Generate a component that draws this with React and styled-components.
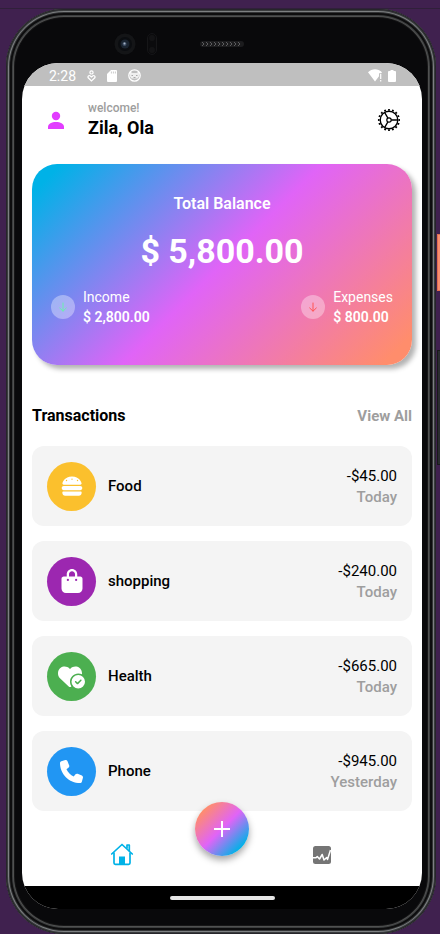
import React from "react";
import styled, { createGlobalStyle } from "styled-components";
import {
  FaBurger,
  FaBagShopping,
  FaHeartCircleCheck,
  FaPhone,
} from "react-icons/fa6";

const GlobalStyle = createGlobalStyle`
  * { box-sizing: border-box; }
  body {
    margin: 0;
    background: #40214f;
    font-family: Roboto, "Liberation Sans", sans-serif;
    color: #000;
  }
  h1, h2, p, ul { margin: 0; padding: 0; font-size: inherit; }
  button, a { font: inherit; color: inherit; text-decoration: none; }
`;

const Desktop = styled.div`
  border-top: 8px solid #40214f;
  box-shadow: inset 0 1px 0 #30203a;
  padding: 1px 4px 0 6px;
  overflow: hidden;
`;

const Phone = styled.div`
  position: relative;
  display: flex;
  flex-direction: column;
  padding: 0 14px 25px 16px;
  border-radius: 58px;
  background: #09090b;
  box-shadow:
    inset 0 0 0 1px #26252a,
    inset 0 0 0 2px #3a3c3e,
    inset 0 0 0 3px #7d8082,
    inset 0 0 0 4px #333436,
    inset 0 0 0 6px #0d0d0e,
    inset 0 0 0 7px #3c3e3f,
    inset 0 0 0 8px #505151,
    inset 0 0 0 9px #161617;
`;

const SideButton = styled.span`
  position: absolute;
  left: 100%;
  top: ${(p) => p.$top}px;
  width: 6px;
  height: ${(p) => p.$height}px;
  margin-left: 1px;
  background: ${(p) => p.$color};
  border: 1px solid ${(p) => p.$edge};
`;

const Forehead = styled.div`
  display: grid;
  grid-template-columns: 1fr 44px 1fr;
  align-items: center;
  height: 54px;
  padding-top: 16px;
`;

const Sensors = styled.div`
  display: flex;
  align-items: center;
  justify-content: flex-end;
  gap: 11px;
  padding-right: 43px;
`;

const Screen = styled.div`
  overflow: hidden;
  border-radius: 36px;
  background: #fff;
`;

const StatusBar = styled.div`
  display: flex;
  align-items: center;
  justify-content: space-between;
  height: 23px;
  padding: 2px 26px 0 27px;
  background: #bfbfbf;
  color: #fff;
  font-size: 14px;
  line-height: 16px;
`;

const StatusGroup = styled.div`
  display: flex;
  align-items: center;
  gap: ${(p) => p.$gap}px;
`;

const Main = styled.main`
  padding: 14px 10px 0;
`;

const Header = styled.header`
  display: flex;
  align-items: center;
  gap: 8px;
`;

const Avatar = styled.span`
  display: flex;
  justify-content: center;
  width: 48px;
  color: #e23dff;
`;

const Greeting = styled.div`
  flex: 1;
`;

const Welcome = styled.p`
  font-size: 12px;
  line-height: 16px;
  font-weight: 500;
  color: #9e9e9e;
`;

const UserName = styled.h1`
  font-size: 18px;
  line-height: 24px;
  font-weight: 700;
`;

const IconButton = styled.button`
  display: flex;
  justify-content: center;
  width: 46px;
  padding: 0;
  border: 0;
  background: none;
  color: ${(p) => p.$color};
  cursor: pointer;
`;

const BalanceCard = styled.section`
  margin-top: 24px;
  padding: 29px 19px 38px;
  border-radius: 25px;
  background: linear-gradient(135deg, #00b2e7 5%, #e064f7 50%, #ff8d6c 95%);
  box-shadow: 4px 4px 5px #0000004d;
  color: #fff;
  text-align: center;
`;

const CardTitle = styled.h2`
  font-size: 16px;
  line-height: 22px;
  font-weight: 600;
`;

const CardAmount = styled.p`
  margin: 12px 0;
  font-size: 34px;
  line-height: 48px;
  font-weight: 700;
`;

const Flows = styled.div`
  display: flex;
  justify-content: space-between;
  text-align: left;
`;

const Flow = styled.div`
  display: flex;
  align-items: center;
  gap: 8px;
`;

const FlowBadge = styled.span`
  display: flex;
  align-items: center;
  justify-content: center;
  width: 24px;
  height: 24px;
  border-radius: 50%;
  background: #ffffff59;
  color: ${(p) => p.$color};
`;

const FlowText = styled.p`
  font-size: 14px;
  line-height: 20px;
  font-weight: ${(p) => (p.$strong ? 600 : 400)};
`;

const SectionHead = styled.div`
  display: flex;
  justify-content: space-between;
  margin: 41px 0 20px;
  font-size: 16px;
  line-height: 20px;
  font-weight: 700;
`;

const ViewAll = styled.a`
  && {
    color: #9e9e9e;
    font-size: 15px;
  }
`;

const List = styled.ul`
  display: flex;
  flex-direction: column;
  gap: 15px;
  list-style: none;
`;

const Row = styled.li`
  display: flex;
  align-items: center;
  gap: 12px;
  height: 80px;
  padding: 0 15px;
  border-radius: 12px;
  background: #f4f4f4;
`;

const Category = styled.span`
  display: flex;
  align-items: center;
  justify-content: center;
  width: 49px;
  height: 49px;
  border-radius: 50%;
  background: ${(p) => p.$color};
  color: #fff;
`;

const RowName = styled.span`
  flex: 1;
  font-size: 15px;
  line-height: 20px;
  font-weight: 500;
`;

const RowFigures = styled.div`
  padding-top: 1px;
  text-align: right;
  font-size: 15px;
  line-height: 21px;
`;

const RowDate = styled.p`
  font-weight: 500;
  color: #9e9e9e;
`;

const Nav = styled.nav`
  position: relative;
  display: grid;
  grid-template-columns: 1fr 1fr;
  justify-items: center;
  align-items: center;
  height: 63px;
  margin-top: 12px;
`;

const AddButton = styled.button`
  position: absolute;
  left: 50%;
  top: -21px;
  transform: translateX(-50%);
  display: flex;
  align-items: center;
  justify-content: center;
  width: 54px;
  height: 54px;
  padding: 0;
  border: 0;
  border-radius: 50%;
  background: linear-gradient(315deg, #00b2e7 15%, #e064f7 50%, #ff8d6c 85%);
  box-shadow: 0 4px 7px #00000059;
  cursor: pointer;
`;

const SystemBar = styled.div`
  display: flex;
  justify-content: center;
  align-items: center;
  height: 23px;
  background: #000;
`;

const HomePill = styled.span`
  width: 105px;
  height: 4px;
  border-radius: 2px;
  background: #e6e6e6;
`;

const Camera = () => (
  <svg width="22" height="22" viewBox="0 0 22 22" aria-hidden="true">
    <circle cx="11" cy="11" r="10.5" fill="#141517" />
    <circle cx="11" cy="11" r="7" fill="#0b0d10" />
    <circle cx="11" cy="11" r="4.5" fill="#1a2430" />
    <circle cx="10.5" cy="11" r="2" fill="#3f4f66" />
    <circle cx="10.5" cy="10.5" r="1" fill="#a9b5c4" />
  </svg>
);

const Proximity = () => (
  <svg width="10" height="22" viewBox="0 0 10 22" aria-hidden="true">
    <rect x=".5" y=".5" width="9" height="21" rx="4.5" fill="#0b0b0d" stroke="#161618" />
    <circle cx="5" cy="5" r="3" fill="#131315" />
    <circle cx="5" cy="17" r="3" fill="#131315" />
  </svg>
);

const Speaker = () => (
  <svg width="44" height="6" viewBox="0 0 44 6" aria-hidden="true">
    <rect width="44" height="6" rx="3" fill="#1c1c1e" />
    <path
      d="M2 1l2 2-2 2M6 1l2 2-2 2M10 1l2 2-2 2M14 1l2 2-2 2M18 1l2 2-2 2M22 1l2 2-2 2M26 1l2 2-2 2M30 1l2 2-2 2M34 1l2 2-2 2M38 1l2 2-2 2"
      fill="none"
      stroke="#5c5c5e"
    />
  </svg>
);

const DebugIcon = () => (
  <svg width="9" height="12" viewBox="0 0 9 12" fill="none" stroke="#fff" strokeWidth="1.2" aria-hidden="true">
    <circle cx="4.5" cy="2.4" r="1.6" />
    <path d="M4.5 11 1.2 7.8C.4 6.600 1.7 5 3 5.700L4.500 7 6 5.700C7.300 5 8.600 6.600 7.800 7.800Z" />
  </svg>
);

const CardIcon = () => (
  <svg width="10" height="12" viewBox="0 0 10 12" aria-hidden="true">
    <path fill="#fff" d="M4 0h5a1 1 0 0 1 1 1v10a1 1 0 0 1-1 1H1a1 1 0 0 1-1-1V4z" />
    <path stroke="#bfbfbf" strokeWidth=".8" d="M4.4 1.5v2M6.4 1.5v2M8.4 1.5v2" />
  </svg>
);

const CatIcon = () => (
  <svg width="13" height="13" viewBox="0 0 13 13" aria-hidden="true">
    <circle cx="6.500" cy="6.500" r="5.700" fill="none" stroke="#fff" strokeWidth="1.300" />
    <path fill="#fff" d="M2 2.500 4.500 4h4L11 2.500v5L9.500 9.500h-6L2 7.500z" opacity=".75" />
    <path stroke="#aaa" strokeWidth="1" d="M3.500 6.500H5M8 6.500h1.500M5.500 8.500h2" />
  </svg>
);

const WifiIcon = () => (
  <svg width="15" height="13" viewBox="0 0 15 13" aria-hidden="true">
    <path fill="#fff" d="M7 12.500 0 3.200C4-.8 10-.8 14 3.200l-.8 1H11v3z" />
    <path stroke="#fff" strokeWidth="1.200" d="M12.700 5v5M12.700 11v1.500" />
  </svg>
);

const BatteryIcon = () => (
  <svg width="8" height="12" viewBox="0 0 8 12" aria-hidden="true">
    <path fill="#fff" d="M2.500 0h3v1H7a1 1 0 0 1 1 1v9a1 1 0 0 1-1 1H1a1 1 0 0 1-1-1V2a1 1 0 0 1 1-1h1.500z" />
  </svg>
);

const PersonIcon = () => (
  <svg width="24" height="24" viewBox="0 0 24 24" fill="currentColor" aria-hidden="true">
    <circle cx="12" cy="8" r="4.200" />
    <path d="M4 21v-2c0-3.200 3.800-5 8-5s8 1.800 8 5v2z" />
  </svg>
);

const GearIcon = () => (
  <svg width="24" height="24" viewBox="0 0 24 24" fill="none" stroke="currentColor" aria-hidden="true">
    <circle cx="12" cy="12" r="8.800" strokeWidth="1.400" />
    <circle cx="12" cy="12" r="10.200" strokeWidth="1.700" pathLength="64" strokeDasharray="1.800 2.200" strokeDashoffset=".9" />
    <circle cx="12" cy="12" r="2.200" strokeWidth="1.200" />
    <path strokeWidth="1.300" d="M14.200 12h6.600M10.900 10.100 7.600 4.400M10.900 13.900l-3.300 5.700" />
  </svg>
);

const ArrowDown = () => (
  <svg width="8" height="10" viewBox="0 0 8 10" fill="none" stroke="currentColor" strokeWidth="1" strokeLinecap="round" strokeLinejoin="round" aria-hidden="true">
    <path d="M4 1v8M.7 6 4 9.200 7.300 6" />
  </svg>
);

const HomeIcon = () => (
  <svg width="24" height="24" viewBox="0 0 24 24" fill="none" stroke="currentColor" strokeWidth="1.700" strokeLinejoin="round" strokeLinecap="round" aria-hidden="true">
    <path d="M1.700 11 12 1.500 22.300 11" />
    <path d="M4 10V20q0 1.300 1.300 1.300h13.400q1.300 0 1.300-1.300V10" />
    <path d="M17 5V2h2.300v5.700" />
    <path fill="currentColor" stroke="none" d="M9 21v-7.500h6V21z" />
  </svg>
);

const GraphIcon = () => (
  <svg width="18" height="18" viewBox="0 0 18 18" aria-hidden="true">
    <rect width="18" height="18" rx="2.500" fill="currentColor" />
    <path d="M0 11.800h3l1.300-1.300L6.500 13l2.700-4.500L11 14l2.700-2.500.8 2L17.500 4" fill="none" stroke="#fff" strokeWidth="1.500" strokeLinejoin="round" />
  </svg>
);

const PlusIcon = () => (
  <svg width="16" height="16" viewBox="0 0 16 16" stroke="#fff" strokeWidth="2" aria-hidden="true">
    <path d="M8 0v16M0 8h16" />
  </svg>
);

const TRANSACTIONS = [
  { name: "Food", amount: "-$45.00", date: "Today", color: "#fbc02d", icon: <FaBurger size={22} /> },
  { name: "shopping", amount: "-$240.00", date: "Today", color: "#9c27b0", icon: <FaBagShopping size={24} /> },
  { name: "Health", amount: "-$665.00", date: "Today", color: "#4caf50", icon: <FaHeartCircleCheck size={27} /> },
  { name: "Phone", amount: "-$945.00", date: "Yesterday", color: "#2196f3", icon: <FaPhone size={23} /> },
];

const FLOWS = [
  { label: "Income", amount: "$ 2,800.00", color: "#69f0ae" },
  { label: "Expenses", amount: "$ 800.00", color: "#ff5252" },
];

export default function App() {
  return (
    <>
      <GlobalStyle />
      <Desktop>
        <Phone>
          <SideButton $top={225} $height={57} $color="#f98e70" $edge="#e0704f" />
          <SideButton $top={341} $height={115} $color="#2b2d30" $edge="#1a1a1c" />
          <Forehead>
            <Sensors>
              <Camera />
              <Proximity />
            </Sensors>
            <Speaker />
          </Forehead>
          <Screen>
            <StatusBar>
              <StatusGroup $gap={11}>
                <span>2:28</span>
                <DebugIcon />
                <CardIcon />
                <CatIcon />
              </StatusGroup>
              <StatusGroup $gap={5}>
                <WifiIcon />
                <BatteryIcon />
              </StatusGroup>
            </StatusBar>
            <Main>
              <Header>
                <Avatar>
                  <PersonIcon />
                </Avatar>
                <Greeting>
                  <Welcome>welcome!</Welcome>
                  <UserName>Zila, Ola</UserName>
                </Greeting>
                <IconButton $color="#000" aria-label="Settings">
                  <GearIcon />
                </IconButton>
              </Header>
              <BalanceCard>
                <CardTitle>Total Balance</CardTitle>
                <CardAmount>$ 5,800.00</CardAmount>
                <Flows>
                  {FLOWS.map((flow) => (
                    <Flow key={flow.label}>
                      <FlowBadge $color={flow.color}>
                        <ArrowDown />
                      </FlowBadge>
                      <div>
                        <FlowText>{flow.label}</FlowText>
                        <FlowText $strong>{flow.amount}</FlowText>
                      </div>
                    </Flow>
                  ))}
                </Flows>
              </BalanceCard>
              <SectionHead>
                <h2>Transactions</h2>
                <ViewAll href="#all">View All</ViewAll>
              </SectionHead>
              <List>
                {TRANSACTIONS.map((item) => (
                  <Row key={item.name}>
                    <Category $color={item.color}>{item.icon}</Category>
                    <RowName>{item.name}</RowName>
                    <RowFigures>
                      <p>{item.amount}</p>
                      <RowDate>{item.date}</RowDate>
                    </RowFigures>
                  </Row>
                ))}
              </List>
            </Main>
            <Nav>
              <IconButton $color="#00b2e7" aria-label="Home">
                <HomeIcon />
              </IconButton>
              <IconButton $color="#757575" aria-label="Statistics">
                <GraphIcon />
              </IconButton>
              <AddButton aria-label="Add transaction">
                <PlusIcon />
              </AddButton>
            </Nav>
            <SystemBar>
              <HomePill />
            </SystemBar>
          </Screen>
        </Phone>
      </Desktop>
    </>
  );
}
